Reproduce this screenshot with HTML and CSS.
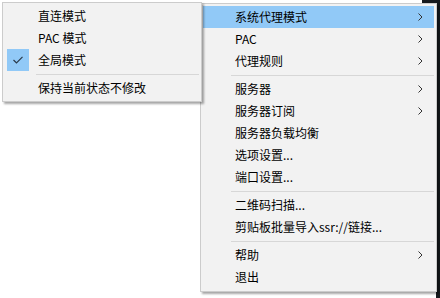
FILE: index.html
```html
<!DOCTYPE html>
<html lang="zh-CN">
  <head>
    <meta charset="UTF-8" />
    <title>菜单</title>
    <link rel="stylesheet" href="styles.css">
  </head>
  <body>
    <div class="screen">
      <ul class="menu main-menu">
        <li class="item active"><span>系统代理模式</span><svg class="arrow" width="5" height="8" viewBox="0 0 5 8"><polyline points="0.5,0.5 4,4 0.5,7.5" /></svg></li>
        <li class="item"><span>PAC</span><svg class="arrow" width="5" height="8" viewBox="0 0 5 8"><polyline points="0.5,0.5 4,4 0.5,7.5" /></svg></li>
        <li class="item"><span>代理规则</span><svg class="arrow" width="5" height="8" viewBox="0 0 5 8"><polyline points="0.5,0.5 4,4 0.5,7.5" /></svg></li>
        <li class="sep"></li>
        <li class="item"><span>服务器</span><svg class="arrow" width="5" height="8" viewBox="0 0 5 8"><polyline points="0.5,0.5 4,4 0.5,7.5" /></svg></li>
        <li class="item"><span>服务器订阅</span><svg class="arrow" width="5" height="8" viewBox="0 0 5 8"><polyline points="0.5,0.5 4,4 0.5,7.5" /></svg></li>
        <li class="item"><span>服务器负载均衡</span></li>
        <li class="item"><span>选项设置...</span></li>
        <li class="item"><span>端口设置...</span></li>
        <li class="sep"></li>
        <li class="item"><span>二维码扫描...</span></li>
        <li class="item"><span>剪贴板批量导入ssr://链接...</span></li>
        <li class="sep"></li>
        <li class="item"><span>帮助</span><svg class="arrow" width="5" height="8" viewBox="0 0 5 8"><polyline points="0.5,0.5 4,4 0.5,7.5" /></svg></li>
        <li class="item"><span>退出</span></li>
      </ul>

      <ul class="menu sub-menu">
        <li class="item"><span class="check"></span><span>直连模式</span></li>
        <li class="item"><span class="check"></span><span>PAC 模式</span></li>
        <li class="item"><span class="check on"><svg width="10" height="8" viewBox="0 0 10 8"><polyline points="0.5,4 3.5,7 9.5,0.8" /></svg></span><span>全局模式</span></li>
        <li class="sep"></li>
        <li class="item"><span class="check"></span><span>保持当前状态不修改</span></li>
      </ul>
    </div>
  </body>
</html>
```

FILE: styles.css
```css
* {
  margin: 0;
  padding: 0;
  box-sizing: border-box;
}

body {
  width: 440px;
  height: 298px;
  overflow: hidden;
  background:
    linear-gradient(#15191d, #15191d) 422px 0 / 18px 3px no-repeat,
    linear-gradient(to right, #ffffff 436px, #15191d 436px);
  font-family: "Noto Sans CJK SC", "Microsoft YaHei", sans-serif;
  font-size: 12px;
  color: #000;
}

.screen {
  position: relative;
  height: 298px;
  padding: 3px 0 0 200px;
}

.menu {
  list-style: none;
  background-color: #f2f2f2;
  border: 1px solid #cccccc;
  padding: 2px;
  box-shadow: 2px 2px 2px rgba(0, 0, 0, 0.35);
}

.main-menu {
  width: 237px;
  padding-bottom: 3px;
}

.item {
  height: 22px;
  display: flex;
  align-items: center;
  justify-content: space-between;
  padding: 0 11px 0 32px;
  line-height: 22px;
}

.item.active {
  background-color: #91c9f7;
}

.arrow polyline {
  fill: none;
  stroke: #333;
  stroke-width: 1;
}

.sep {
  height: 6px;
  display: flex;
  align-items: center;
  padding-left: 28px;
}

.sep::after {
  content: "";
  display: block;
  flex: 1;
  height: 1px;
  background-color: #d7d7d7;
}

/* popup submenu, lies over the main menu */
.sub-menu {
  position: absolute;
  left: 2px;
  top: 2px;
  width: 200px;
}

.sub-menu .item {
  justify-content: flex-start;
  padding: 0;
}

.check {
  width: 22px;
  height: 22px;
  margin: 0 9px 0 2px;
  display: flex;
  align-items: center;
  justify-content: center;
}

.check.on {
  background-color: #91c9f7;
}

.check polyline {
  fill: none;
  stroke: #2a3a4a;
  stroke-width: 1.2;
}

.sub-menu .sep {
  padding-left: 31px;
}
```
